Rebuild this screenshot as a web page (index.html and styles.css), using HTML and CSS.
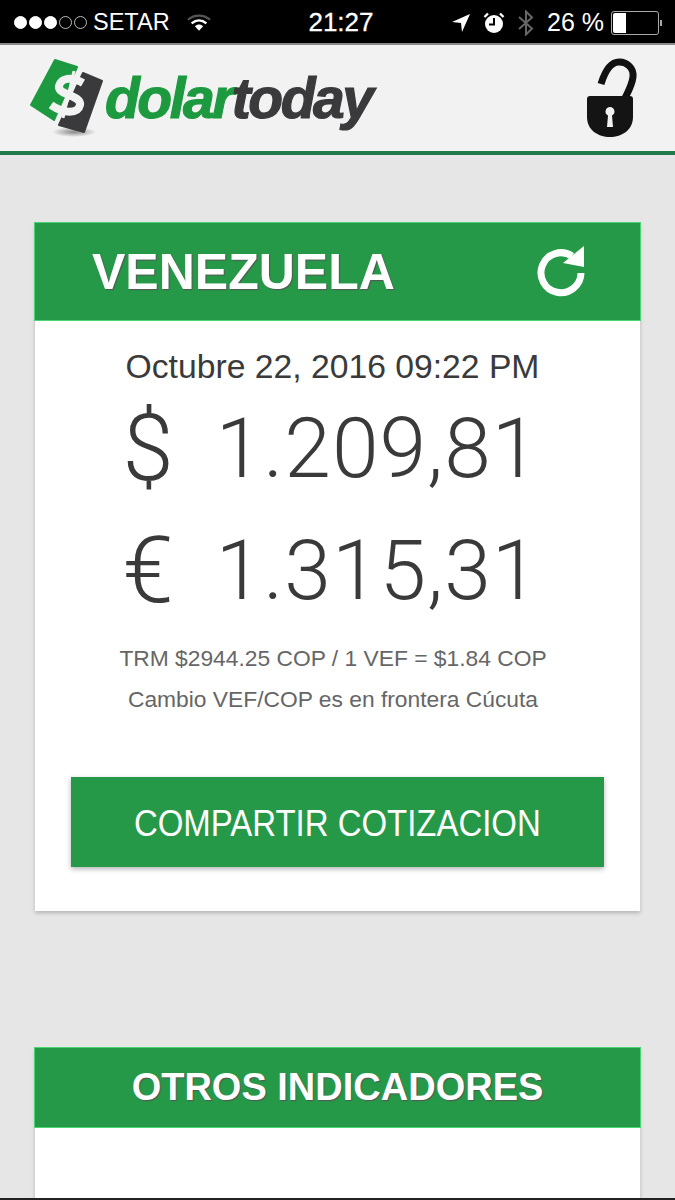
FILE: index.html
```html
<!DOCTYPE html>
<html lang="es">
<head>
  <meta charset="UTF-8">
  <title>DolarToday</title>
  <link rel="stylesheet" href="styles.css">
</head>
<body>

  <div class="status-bar">
    <div class="status-left">
      <span class="signal">
        <i class="dot on"></i><i class="dot on"></i><i class="dot on"></i><i class="dot"></i><i class="dot"></i>
      </span>
      <span class="carrier">SETAR</span>
      <svg class="wifi" width="24" height="20" viewBox="0 0 26 20">
        <path d="M1 6.500C8 .5 18 .5 25 6.500" fill="none" stroke="#555" stroke-width="2.400"/>
        <path d="M5 10.500C10 6 16 6 21 10.500" fill="none" stroke="#fff" stroke-width="2.600"/>
        <path d="M8.500 13.500C11.500 11 14.500 11 17.500 13.500L13 18.500Z" fill="#fff"/>
      </svg>
    </div>
    <div class="status-time">21:27</div>
    <div class="status-right">
      <svg width="20" height="20" viewBox="0 0 20 20"><path d="M1 9L19 1L11 19L10 10Z" fill="#fff"/></svg>
      <svg class="alarm" width="22" height="22" viewBox="0 0 22 22">
        <circle cx="11" cy="12" r="9" fill="#fff"/>
        <path d="M11 6V12.500H6" fill="none" stroke="#000" stroke-width="2"/>
        <path d="M1.500 5L5 1.500M20.500 5L17 1.500" stroke="#fff" stroke-width="2.400"/>
      </svg>
      <svg class="bt" width="18" height="26" viewBox="0 0 18 26">
        <path d="M2 7L15 18.500L9 24.500V1.500L15 7.500L2 19" fill="none" stroke="#666" stroke-width="2"/>
      </svg>
      <span class="battery-pct">26 %</span>
      <span class="battery"><span class="battery-level"></span></span>
      <span class="battery-tip"></span>
    </div>
  </div>

  <header class="app-header">
    <div class="logo">
      <svg class="logo-mark" width="78" height="80" viewBox="0 0 78 80">
        <defs>
          <radialGradient id="logoShadow">
            <stop offset="0" stop-color="#888"/>
            <stop offset="1" stop-color="#f2f2f2"/>
          </radialGradient>
        </defs>
        <ellipse cx="44" cy="74" rx="22" ry="5" fill="url(#logoShadow)"/>
        <path d="M25 2L47 9L24 62L1 47Z" fill="#1d9a3f" stroke="#1d9a3f" stroke-width="2" stroke-linejoin="round"/>
        <path d="M53 15L72 23L54 74L29 67Z" fill="#3a3a3c" stroke="#3a3a3c" stroke-width="2" stroke-linejoin="round"/>
        <path d="M53 25C41 18 31 20 29 28C27 37 52 37 50 47C48 56 34 56 21 47" fill="none" stroke="#f2f2f2" stroke-width="8"/>
        <path d="M44 13L33 60" stroke="#f2f2f2" stroke-width="3"/>
      </svg>
      <span class="logo-text"><span class="logo-green">dolar</span><span class="logo-dark">today</span></span>
    </div>
    <svg class="lock" width="54" height="82" viewBox="0 0 54 82">
      <path d="M17 27C21 14 27 5 35 5C44 5 50 12 49 20C48 28 44 35 41 41" fill="none" stroke="#111" stroke-width="7"/>
      <path fill-rule="evenodd" d="M3 42Q3 39 6 39H46Q49 39 49 42V60C49 73 38 80 26 80C14 80 3 73 3 60ZM26 50A4.500 4.500 0 0 0 24 58.500L23 70H29L28 58.500A4.500 4.500 0 0 0 26 50Z" fill="#141414"/>
    </svg>
  </header>

  <main class="content">
    <section class="card">
      <div class="card-head card-head-main">
        <h2>VENEZUELA</h2>
        <svg class="refresh" width="54" height="54" viewBox="0 0 54 54">
          <path d="M38 11A20 20 0 1 0 47 28" fill="none" stroke="#fff" stroke-width="7"/>
          <path d="M29 18L50 1V22Z" fill="#fff"/>
        </svg>
      </div>
      <div class="card-body">
        <p class="date">Octubre 22, 2016 09:22 PM</p>
        <p class="rate"><span class="rate-sign">$</span><span>1.209,81</span></p>
        <p class="rate"><span class="rate-sign">€</span><span>1.315,31</span></p>
        <p class="note note-first">TRM $2944.25 COP / 1 VEF = $1.84 COP</p>
        <p class="note">Cambio VEF/COP es en frontera Cúcuta</p>
        <button class="share"><span>COMPARTIR COTIZACION</span></button>
      </div>
    </section>

    <section class="card card-other">
      <div class="card-head">
        <h2>OTROS INDICADORES</h2>
      </div>
      <div class="card-body"></div>
    </section>
  </main>

  <div class="bottom-line"></div>

</body>
</html>
```

FILE: styles.css
```css
body {
  margin: 0;
  height: 1200px;
  overflow: hidden;
  background: #e6e6e6;
  font-family: "Liberation Sans", Arial, sans-serif;
  color: #3a3a3a;
  display: flex;
  flex-direction: column;
}

/* status bar */
.status-bar {
  height: 43px;
  background: #000;
  color: #fff;
  display: flex;
  align-items: center;
  justify-content: space-between;
  padding: 0 13px 0 14px;
  font-size: 23.500px;
  border-bottom: 2px solid #8a8a8a;
  flex-shrink: 0;
}

.status-left,
.status-right {
  display: flex;
  align-items: center;
  width: 240px;
  padding-top: 2px;
}

.status-right {
  justify-content: flex-end;
}

.signal {
  display: flex;
  gap: 2px;
  margin-right: 6px;
}

.dot {
  width: 11px;
  height: 11px;
  border: 1px solid #bbb;
  border-radius: 50%;
}

.dot.on {
  background: #fff;
  border-color: #fff;
}

.wifi {
  margin-left: 17px;
}

.status-time {
  font-size: 26px;
  padding: 2px 0 0 6px;
  -webkit-text-stroke: 0.3px #fff;
}

.status-right svg {
  margin-right: 12px;
}

.battery-pct {
  font-size: 25px;
  margin-right: 7px;
}

.battery {
  width: 44px;
  height: 20px;
  border: 1px solid #aaa;
  border-radius: 3px;
  padding: 1px;
  display: flex;
}

.battery-level {
  width: 13px;
  background: #fff;
  border-radius: 2px 0 0 2px;
}

.battery-tip {
  width: 2px;
  height: 6px;
  background: #aaa;
  margin-left: 1px;
}

/* app header */
.app-header {
  height: 106px;
  background: #f2f2f2;
  border-bottom: 4px solid #23784a;
  display: flex;
  align-items: center;
  justify-content: space-between;
  padding: 0 37px 0 30px;
  flex-shrink: 0;
}

.logo {
  display: flex;
  align-items: center;
}

.logo-text {
  font-size: 57px;
  font-weight: bold;
  font-style: italic;
  letter-spacing: -2.500px;
  margin-left: -3px;
  -webkit-text-stroke: 1.200px;
}

.logo-green {
  color: #1d9a3f;
}

.logo-dark {
  color: #3a3a3c;
}

/* cards */
.content {
  flex: 1;
  padding: 68px 35px 0;
  display: flex;
  flex-direction: column;
  gap: 137px;
  overflow: hidden;
}

.card {
  background: #fff;
  box-shadow: 0 2px 4px rgba(0, 0, 0, 0.22);
}

.card-head {
  height: 97px;
  background: #259947;
  box-shadow: 0 0 0 1px #4bd675;
  display: flex;
  align-items: center;
  justify-content: center;
}

.card-head-main {
  justify-content: space-between;
  padding: 0 52px 0 57px;
}

.card-head h2 {
  margin: 0;
  color: #fff;
  font-size: 50px;
  font-weight: bold;
  text-shadow: 1px 1px 1px #555;
}

.card-other {
  flex: 1;
}

.card-other .card-head {
  height: 79px;
}

.card-other .card-head h2 {
  font-size: 38px;
}

.card-other .card-body {
  padding: 0;
}

.card-body {
  padding: 26px 36px 44px;
  text-align: center;
}

.date {
  margin: 0 0 2px;
  padding-right: 10px;
  font-size: 33.700px;
  line-height: 40px;
}

.rate {
  margin: 0;
  padding-right: 13px;
  font-family: Roboto, "Liberation Sans", sans-serif;
  font-weight: 300;
  font-size: 84px;
  line-height: 122px;
  display: flex;
  justify-content: center;
  align-items: baseline;
  gap: 41px;
  letter-spacing: 1px;
}

.rate-sign {
  font-size: 92px;
  line-height: 1;
  transform: translateY(3px);
}

.note {
  margin: 0;
  padding-right: 9px;
  font-size: 22.800px;
  line-height: 41px;
  color: #666;
}

.note-first {
  margin-top: 6px;
}

.share {
  display: block;
  width: 100%;
  height: 90px;
  margin-top: 57px;
  padding: 4px 0 0;
  border: none;
  background: #259947;
  color: #fff;
  font-family: inherit;
  font-size: 36px;
  box-shadow: 0 2px 5px rgba(0, 0, 0, 0.3);
  white-space: nowrap;
}

.share span {
  display: inline-block;
  transform: scaleX(0.915);
}

.bottom-line {
  height: 2px;
  background: #222;
  flex-shrink: 0;
}
```
